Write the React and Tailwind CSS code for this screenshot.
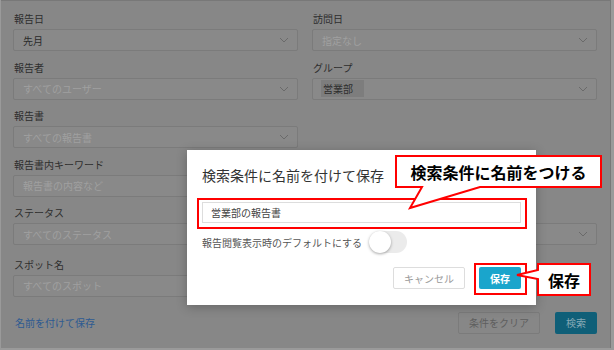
import React from 'react';

const Chevron = () => (
  <svg width="10" height="6" viewBox="0 0 10 6" className="shrink-0">
    <polyline points="1,1 5,5 9,1" fill="none" stroke="#6a6a6a" strokeWidth="1" />
  </svg>
);

const Field = ({ label, children, select = true, className = '' }) => (
  <div className={className}>
    <div className="h-[14px] pl-px text-[10px] leading-[14px] text-[#2e2e2e]">{label}</div>
    <div className="mt-[3px] flex h-[22px] items-center justify-between rounded-[2px] border border-[#7b7b7b] bg-[#898989] pl-[8px] pr-[8px] text-[10px]">
      <div className="flex items-center">{children}</div>
      {select && <Chevron />}
    </div>
  </div>
);

const Placeholder = ({ children }) => <span className="pl-px text-[#a0a0a0]">{children}</span>;

export default function App() {
  return (
    <div className="relative h-[350px] w-[614px] overflow-hidden bg-[#9a9a9a] font-['Noto_Sans_CJK_JP',sans-serif]">
      {/* dimmed search page */}
      <div className="ml-px h-[348px] w-[610px] border-r border-t border-[#787878] bg-[#878787] pl-[12px] pr-[13px] pt-[11px]">
        <div className="grid grid-cols-2 gap-x-[14px] gap-y-[9.5px]">
          <Field label="報告日">
            <span className="pl-px text-[#2a2a2a]">先月</span>
          </Field>
          <Field label="訪問日">
            <Placeholder>指定なし</Placeholder>
          </Field>
          <Field label="報告者">
            <Placeholder>すべてのユーザー</Placeholder>
          </Field>
          <Field label="グループ">
            <span className="flex h-[17px] items-center bg-[#7d7d7d] pl-[2px] pr-[11px] text-[#2e2e2e]">営業部</span>
          </Field>
          <Field label="報告書">
            <Placeholder>すべての報告書</Placeholder>
          </Field>
          <div />
          <Field label="報告書内キーワード" select={false}>
            <Placeholder>報告書の内容など</Placeholder>
          </Field>
          <div />
          <Field label="ステータス">
            <Placeholder>すべてのステータス</Placeholder>
          </Field>
          {/* covered by the modal, only the edge shows */}
          <Field label="" />
          <Field label="スポット名" className="mt-[3px]">
            <Placeholder>すべてのスポット</Placeholder>
          </Field>
          <div />
        </div>
        <div className="mt-[15px] flex items-center justify-between">
          <span className="pl-[2px] text-[10px] text-[#2d5a92]">名前を付けて保存</span>
          <div className="flex gap-[15px]">
            <div className="flex h-[22px] w-[82px] items-center justify-center rounded-[2px] border border-[#7b7b7b] text-[10px] text-[#5e5e5e]">
              条件をクリア
            </div>
            <div className="flex h-[22px] w-[42px] items-center justify-center rounded-[2px] bg-[#0f5f78] text-[10px] text-[#86a9b5]">
              検索
            </div>
          </div>
        </div>
      </div>

      {/* modal */}
      <div className="absolute left-[187px] top-[150px] h-[155px] w-[349px] bg-white px-[15px] pt-[15px] shadow-[0_2px_10px_rgba(0,0,0,0.25)]">
        <div className="h-[20px] text-[14px] leading-[20px] text-[#333]">検索条件に名前を付けて保存</div>
        <div className="mt-[17px] flex h-[21px] items-center border border-[#dddddd] pl-[8px] text-[10px] text-[#444]">
          営業部の報告書
        </div>
        <div className="mt-[8px] flex items-center gap-[7px]">
          <span className="text-[10px] text-[#555]">報告閲覧表示時のデフォルトにする</span>
          <div className="relative h-[22px] w-[38px] rounded-full bg-[#ebebeb]">
            <div className="absolute left-0 top-0 h-[22px] w-[22px] rounded-full bg-white shadow-[0_1px_3px_rgba(0,0,0,0.35)]" />
          </div>
        </div>
        <div className="mt-[14px] flex justify-end gap-[14px]">
          <div className="flex h-[22px] w-[72px] items-center justify-center rounded-[2px] border border-[#dddddd] text-[10px] text-[#999]">
            キャンセル
          </div>
          <div className="flex h-[22px] w-[42px] items-center justify-center rounded-[2px] bg-[#1aa5cc] text-[10px] font-bold text-white">
            保存
          </div>
        </div>
      </div>

      {/* annotations */}
      <div className="absolute left-[197px] top-[198px] h-[31px] w-[330px] border-2 border-[#ff0000]" />
      <div className="absolute left-[474px] top-[263px] h-[32px] w-[53px] border-2 border-[#ff0000]" />
      <svg className="absolute left-0 top-0" width="614" height="350">
        <path d="M396,156 H601 V187 H480 L410,208 L422,187 H396 Z" fill="#fff" stroke="#ff0000" strokeWidth="2" />
        <path d="M538,264 H590 V295 H538 V279 L517,275 L538,270 Z" fill="#fff" stroke="#ff0000" strokeWidth="2" />
      </svg>
      <div className="absolute left-[397px] top-[157px] flex h-[29px] w-[203px] items-center justify-center text-[16px] font-bold text-black">
        検索条件に名前をつける
      </div>
      <div className="absolute left-[539px] top-[265px] flex h-[29px] w-[50px] items-center justify-center text-[16px] font-bold text-black">
        保存
      </div>
    </div>
  );
}
